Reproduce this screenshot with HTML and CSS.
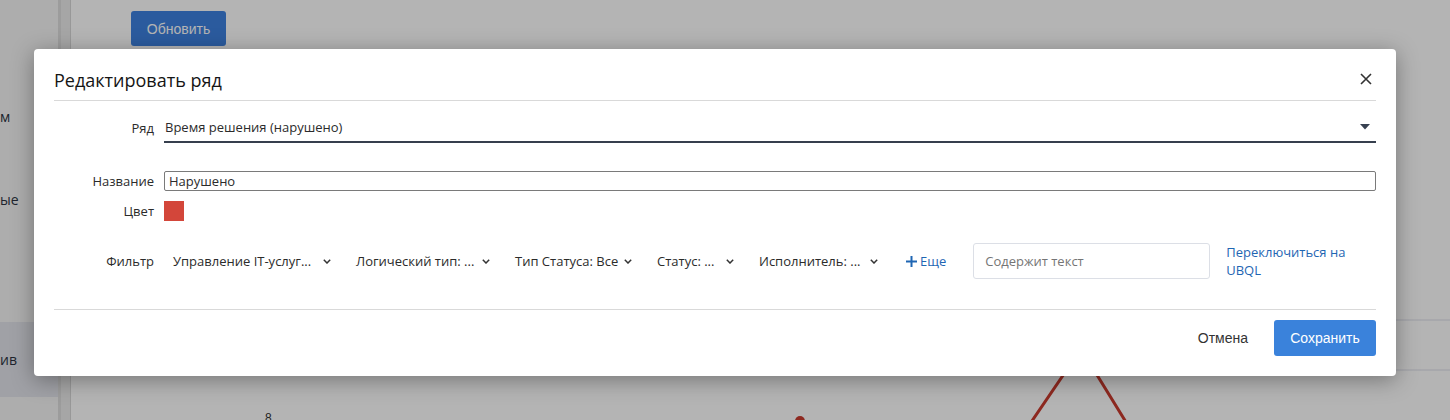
FILE: index.html
```html
<!DOCTYPE html>
<html lang="ru">
<head>
<meta charset="utf-8">
<title>Редактировать ряд</title>
<link rel="stylesheet" href="styles.css">
</head>
<body>
<div class="page">
  <aside class="sidebar">
    <div class="s-item s-first">м</div>
    <div class="s-item s-second">ые</div>
    <div class="s-item s-active">ив</div>
  </aside>
  <div class="scrollbar"></div>
  <main class="main">
    <div class="toolbar"><button class="btn-refresh">Обновить</button></div>
    <svg class="chart" width="1379" height="374" viewBox="0 0 1379 374">
      <line x1="130" y1="274" x2="1379" y2="274" class="grid"/>
      <line x1="130" y1="324" x2="1379" y2="324" class="grid"/>
      <polyline points="948,394 1010,303 1066,394" class="series"/>
      <circle cx="729" cy="375" r="5" class="dot"/>
      <text x="194" y="376" class="axis">8</text>
    </svg>
  </main>
</div>
<div class="overlay"></div>

<div class="modal">
  <div class="m-head">
    <h2 class="m-title">Редактировать ряд</h2>
    <button class="m-close" aria-label="Закрыть">
      <svg width="12" height="12" viewBox="0 0 12 12"><path d="M1 1L11 11M11 1L1 11" stroke="#333" stroke-width="1.6" fill="none"/></svg>
    </button>
  </div>

  <div class="m-body">
    <div class="row row-series">
      <div class="lbl">Ряд</div>
      <div class="select">
        <span>Время решения (нарушено)</span>
        <svg width="10" height="6" viewBox="0 0 10 6"><path d="M0 0H10L5 5.5Z" fill="#374151"/></svg>
      </div>
    </div>
    <div class="row row-name">
      <div class="lbl">Название</div>
      <div class="text-input">Нарушено</div>
    </div>
    <div class="row row-color">
      <div class="lbl">Цвет</div>
      <div class="swatch"></div>
    </div>
    <div class="row row-filter">
      <div class="lbl">Фильтр</div>
      <div class="filters">
        <div class="f-item f1"><span>Управление IT-услуг...</span><svg class="chev" width="8" height="5" viewBox="0 0 8 5"><path d="M0.8 0.8L4 4L7.2 0.8" stroke="#333" stroke-width="1.5" fill="none"/></svg></div>
        <div class="f-item f2"><span>Логический тип: ...</span><svg class="chev" width="8" height="5" viewBox="0 0 8 5"><path d="M0.8 0.8L4 4L7.2 0.8" stroke="#333" stroke-width="1.5" fill="none"/></svg></div>
        <div class="f-item f3"><span>Тип Статуса: Все</span><svg class="chev" width="8" height="5" viewBox="0 0 8 5"><path d="M0.8 0.8L4 4L7.2 0.8" stroke="#333" stroke-width="1.5" fill="none"/></svg></div>
        <div class="f-item f4"><span>Статус: ...</span><svg class="chev" width="8" height="5" viewBox="0 0 8 5"><path d="M0.8 0.8L4 4L7.2 0.8" stroke="#333" stroke-width="1.5" fill="none"/></svg></div>
        <div class="f-item f5"><span>Исполнитель: ...</span><svg class="chev" width="8" height="5" viewBox="0 0 8 5"><path d="M0.8 0.8L4 4L7.2 0.8" stroke="#333" stroke-width="1.5" fill="none"/></svg></div>
        <div class="more"><svg width="11" height="11" viewBox="0 0 11 11"><path d="M5.5 0V11M0 5.5H11" stroke="#1f66b3" stroke-width="2" fill="none"/></svg><span>Еще</span></div>
        <div class="search">Содержит текст</div>
        <a class="ubql" href="#">Переключиться на UBQL</a>
      </div>
    </div>
  </div>

  <div class="m-foot">
    <button class="btn-cancel">Отмена</button>
    <button class="btn-save">Сохранить</button>
  </div>
</div>
</body>
</html>
```

FILE: styles.css
```css
* { box-sizing: border-box; }

html, body {
  margin: 0;
  padding: 0;
  width: 1450px;
  height: 420px;
  overflow: hidden;
  background: #fff;
  font-family: "Open Sans", "Noto Sans", sans-serif;
}

.page {
  display: flex;
  width: 1450px;
  height: 420px;
}

.sidebar {
  width: 58px;
  background: #f6f6f6;
  display: flex;
  flex-direction: column;
  padding-top: 97px;
  color: #2c3442;
  font-size: 14px;
}

.s-item {
  height: 40px;
  line-height: 40px;
  white-space: nowrap;
  overflow: hidden;
}

.s-second { margin-top: 43px; }

.s-active {
  margin-top: 102px;
  height: 75px;
  line-height: 75px;
  background: #e3e5ec;
}

.scrollbar {
  width: 13px;
  background: #ececec;
  border-left: 3px solid #dedede;
  border-right: 1px solid #d8d8d8;
}

.main {
  flex: 1;
  display: flex;
  flex-direction: column;
}

.toolbar {
  padding: 11px 0 0 60px;
  height: 46px;
}

.btn-refresh {
  width: 95px;
  height: 35px;
  border: none;
  border-radius: 3px;
  background: #3d82e0;
  color: #fff;
  font-family: "Liberation Sans", Arial, sans-serif;
  font-size: 14px;
}

.chart { display: block; }

.chart .grid { stroke: #dcdde9; stroke-width: 1; }
.chart .series { stroke: #c83a2e; stroke-width: 3; fill: none; }
.chart .dot { fill: #c83a2e; }
.chart .axis { font-family: "Liberation Sans", Arial, sans-serif; font-size: 12px; fill: #333; }

.overlay {
  position: absolute;
  inset: 0;
  background: rgba(0, 0, 0, 0.295);
}

/* Modal */
.modal {
  position: absolute;
  left: 34px;
  top: 49px;
  width: 1362px;
  background: #fff;
  border-radius: 4px;
  box-shadow: 0 4px 22px rgba(0, 0, 0, 0.35);
  color: #2b2b2b;
  font-size: 13px;
}

.m-head {
  margin: 0 20px;
  height: 52px;
  padding-top: 10px;
  border-bottom: 1px solid #d9d9d9;
  display: flex;
  align-items: center;
  justify-content: space-between;
}

.m-title {
  margin: 0;
  font-size: 18px;
  font-weight: 500;
  color: #151515;
  line-height: 24px;
}

.m-close {
  border: none;
  background: none;
  padding: 0;
  margin-right: 4px;
  margin-top: -1px;
  width: 12px;
  height: 12px;
  display: flex;
}

.m-body {
  padding: 0 20px;
}

.row {
  display: flex;
  align-items: center;
  gap: 10px;
}

.lbl {
  width: 100px;
  flex: none;
  text-align: right;
}

.row-series { margin-top: 15px; }
.row-name { margin-top: 28px; }
.row-color { margin-top: 10px; }
.row-filter { margin-top: 22px; }

.row-series .lbl { margin-top: -4px; }

.select {
  flex: 1;
  height: 27px;
  border-bottom: 2px solid #363f4e;
  display: flex;
  align-items: center;
  justify-content: space-between;
  padding: 0 6px 4px 1px;
}

.text-input {
  flex: 1;
  height: 20px;
  border: 1px solid #7a7a7a;
  border-radius: 2px;
  padding: 0 4px;
  line-height: 18px;
}

.swatch {
  width: 20px;
  height: 20px;
  background: #d3463a;
}

.filters {
  flex: 1;
  display: flex;
  align-items: center;
  height: 36px;
  padding-left: 9px;
}

.f-item {
  display: flex;
  align-items: center;
  justify-content: space-between;
  margin-right: 25px;
  white-space: nowrap;
}

.f1 { width: 158px; }
.f2 { width: 134px; }
.f3 { width: 117px; }
.f4 { width: 77px; }
.f5 { width: 119px; margin-right: 28px; }

.chev { flex: none; }

.more {
  display: flex;
  align-items: center;
  gap: 3px;
  color: #1f66b3;
  margin-right: 27px;
}

.search {
  width: 237px;
  height: 36px;
  border: 1px solid #dcdfe6;
  border-radius: 3px;
  padding-left: 11px;
  line-height: 34px;
  color: #757575;
}

.ubql {
  margin-left: 16px;
  width: 140px;
  line-height: 18px;
  color: #1f66b3;
  text-decoration: none;
}

.m-foot {
  margin: 30px 20px 0;
  border-top: 1px solid #d9d9d9;
  padding: 10px 0 20px;
  display: flex;
  justify-content: flex-end;
  align-items: center;
}

.btn-cancel {
  border: none;
  background: none;
  font-family: "Liberation Sans", Arial, sans-serif;
  font-size: 14px;
  color: #333;
  padding: 0;
  margin-right: 26px;
}

.btn-save {
  width: 102px;
  height: 36px;
  border: none;
  border-radius: 3px;
  background: #3a82db;
  color: #fff;
  font-family: "Liberation Sans", Arial, sans-serif;
  font-size: 14px;
}
```
